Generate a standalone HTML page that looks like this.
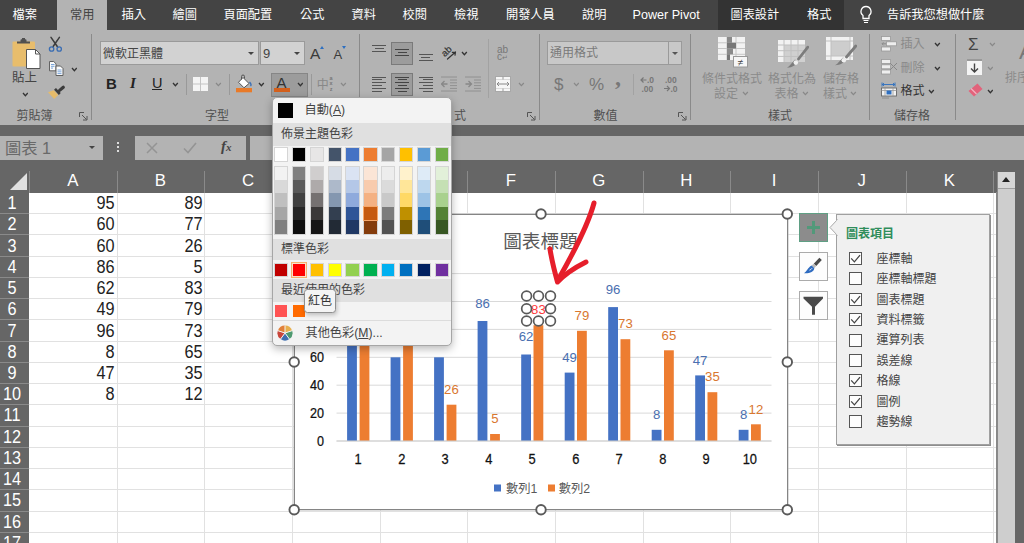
<!DOCTYPE html>
<html lang="zh-Hant"><head><meta charset="utf-8"><title>Excel</title>
<style>
*{box-sizing:border-box;margin:0;padding:0}
html,body{width:1024px;height:543px;overflow:hidden;background:#666}
body{position:relative;font-family:"Liberation Sans","Noto Sans CJK TC",sans-serif;color:#444;font-size:12px}
.abs{position:absolute}
.t{position:absolute;white-space:nowrap;line-height:1}
#tabs{position:absolute;left:0;top:0;width:1024px;height:30px;background:#444}
#tabs .t{color:#fff;font-size:12.2px;top:9px}
#ribbon{position:absolute;left:0;top:30px;width:1024px;height:95px;background:#b3b3b3}
.vsep{position:absolute;width:1px;background:#8c8c8c}
.glabel{position:absolute;font-size:12px;color:#505050;top:110px;line-height:1;white-space:nowrap}
#sheet{position:absolute;left:0;top:193px;width:996px;height:350px;background:#fff;overflow:hidden}
.cell{position:absolute;font-size:17.500px;transform:scaleX(.93);transform-origin:right center;color:#222;text-align:right;line-height:1;white-space:nowrap}
.rh{position:absolute;left:0;width:24px;color:#fff;font-size:17.500px;line-height:1;text-align:center;transform:scaleX(.93);transform-origin:center center}
.ch{position:absolute;color:#fff;font-size:16.800px;line-height:1;top:173.300px;text-align:center}
</style></head><body>
<div id="tabs">
<div class="abs" style="left:57px;top:0;width:50px;height:30px;background:#b3b3b3"></div>
<div class="abs" style="left:718px;top:0;width:126px;height:30px;background:#333"></div>
<span class="t" style="left:12.5px;color:#fff">檔案</span>
<span class="t" style="left:70px;color:#444">常用</span>
<span class="t" style="left:121.5px;color:#fff">插入</span>
<span class="t" style="left:172.5px;color:#fff">繪圖</span>
<span class="t" style="left:223.5px;color:#fff">頁面配置</span>
<span class="t" style="left:300px;color:#fff">公式</span>
<span class="t" style="left:351.5px;color:#fff">資料</span>
<span class="t" style="left:402.5px;color:#fff">校閱</span>
<span class="t" style="left:454px;color:#fff">檢視</span>
<span class="t" style="left:506px;color:#fff">開發人員</span>
<span class="t" style="left:582px;color:#fff">說明</span>
<span class="t" style="left:632.5px;color:#fff;font-size:12.600px">Power Pivot</span>
<span class="t" style="left:730.5px;color:#fff">圖表設計</span>
<span class="t" style="left:807px;color:#fff">格式</span>
<span class="t" style="left:887px;color:#fff">告訴我您想做什麼</span>
<svg class="abs" style="left:858px;top:5px" width="16" height="20" viewBox="0 0 16 20"><path d="M8 1.5a5 5 0 0 0-3 9v3h6v-3a5 5 0 0 0-3-9z" fill="none" stroke="#fff" stroke-width="1.3"/><path d="M5.5 15.5h5M6 17.5h4" stroke="#fff" stroke-width="1.2"/></svg>
</div>
<div id="ribbon">
<svg class="abs" style="left:11px;top:7px" width="31" height="33" viewBox="0 0 31 33"><rect x="1.5" y="4.5" width="22.5" height="25" rx="1" fill="#e8bd6c"/>
<path d="M6 6.5v-2h3.5v-1.2a1 1 0 0 1 1-1h4a1 1 0 0 1 1 1v1.200h3.5v2z" fill="#505050"/>
<rect x="11" y="1" width="3" height="2" fill="#505050"/>
<path d="M15.500 12.500h9l4.500 4.500v14.500h-13.500z" fill="#fff" stroke="#555" stroke-width="1"/>
<path d="M24.500 12.500v4.500h4.500" fill="none" stroke="#555" stroke-width="1"/></svg>
<span class="t" style="left:12px;top:42.2px;font-size:12.5px;color:#444;">貼上</span>
<svg class="abs" style="left:21.6px;top:61.9px" width="6.8" height="6" viewBox="0 0 6.8 6"><path d="M1 1l2.4 2.7l2.4 -2.7" fill="none" stroke="#333" stroke-width="1.3"/></svg>
<svg class="abs" style="left:40px;top:2px" width="50" height="70" viewBox="40 32 50 70"><path d="M51 37.400L57.300 46.500M59.400 37.400L53.100 46.500" stroke="#3c3c3c" stroke-width="1.500" fill="none" stroke-linecap="round"/><circle cx="51.600" cy="49" r="2.200" fill="none" stroke="#3a6db3" stroke-width="1.300"/><circle cx="59.200" cy="49" r="2.200" fill="none" stroke="#3a6db3" stroke-width="1.300"/><path d="M49.500 61.500h4.200l2.300 2.300v7h-6.500z" fill="#fafafa" stroke="#555" stroke-width=".9"/><path d="M51 64.500h3.500M51 66.300h3.500M51 68.100h2" stroke="#5b8fd0" stroke-width=".8"/><path d="M56 66h4.500l2.500 2.500v7h-7z" fill="#fafafa" stroke="#555" stroke-width=".9"/><path d="M57.500 70h4M57.500 71.800h4M57.500 73.600h4" stroke="#5b8fd0" stroke-width=".8"/><path d="M63.300 87.200L59.600 90.400" stroke="#3c3c3c" stroke-width="3.200" stroke-linecap="round"/><path d="M55 88.800L59.800 94" stroke="#3c3c3c" stroke-width="2.600"/><path d="M53.700 90.200L58.200 95l-4 4L48 92.300z" fill="#e6bb6a"/></svg>
<svg class="abs" style="left:70.6px;top:37.4px" width="6.8" height="6" viewBox="0 0 6.8 6"><path d="M1 1l2.4 2.7l2.4 -2.7" fill="none" stroke="#333" stroke-width="1.3"/></svg>
<span class="t" style="left:16.5px;top:80.0px;font-size:12px;color:#505050;">剪貼簿</span>
<svg class="abs" style="left:79px;top:82px" width="9" height="9" viewBox="0 0 9 9"><path d="M0.5 5V0.5H5" fill="none" stroke="#555" stroke-width="1"/><path d="M3 3l4.5 4.5M8 4v4H4" fill="none" stroke="#555" stroke-width="1"/></svg>
<div class="vsep" style="left:91px;top:4px;height:86px;background:#8a8a8a"></div>
<div class="abs" style="left:100px;top:11px;width:159px;height:24px;background:#d2d2d2;border:1px solid #9a9a9a;"></div>
<span class="t" style="left:103px;top:17.6px;font-size:12px;color:#444;">微軟正黑體</span>
<div class="abs" style="left:248.0px;top:21.5px;width:0;height:0;border-left:3.0px solid transparent;border-right:3.0px solid transparent;border-top:3px solid #444"></div>
<div class="abs" style="left:260px;top:11px;width:45px;height:24px;background:#d2d2d2;border:1px solid #9a9a9a;"></div>
<span class="t" style="left:263px;top:16.5px;font-size:13px;color:#444;">9</span>
<div class="abs" style="left:293.5px;top:21.5px;width:0;height:0;border-left:3.0px solid transparent;border-right:3.0px solid transparent;border-top:3px solid #444"></div>
<span class="t" style="left:310px;top:15.8px;font-size:15.5px;color:#3a3a3a;">A</span>
<div class="abs" style="left:319.5px;top:15.500px;width:0;height:0;border-left:2.500px solid transparent;border-right:2.500px solid transparent;border-bottom:3px solid #2e6fc0"></div>
<span class="t" style="left:333.5px;top:18.0px;font-size:13px;color:#3a3a3a;">A</span>
<div class="abs" style="left:342px;top:15.500px;width:0;height:0;border-left:2.500px solid transparent;border-right:2.500px solid transparent;border-top:3px solid #2e6fc0"></div>
<span class="t" style="left:106px;top:46.0px;font-size:15px;color:#222;font-weight:bold">B</span>
<span class="t" style="left:130px;top:46.0px;font-size:15px;color:#222;font-style:italic;font-weight:bold;font-family:'Liberation Serif',serif">I</span>
<span class="t" style="left:152px;top:45.8px;font-size:14.5px;color:#222;">U</span>
<div class="abs" style="left:152px;top:59px;width:10px;height:1px;background:#222;"></div>
<svg class="abs" style="left:171.9px;top:52.4px" width="6.8" height="6" viewBox="0 0 6.8 6"><path d="M1 1l2.4 2.7l2.4 -2.7" fill="none" stroke="#333" stroke-width="1.3"/></svg>
<div class="vsep" style="left:186px;top:44px;height:21px;background:#999"></div>
<svg class="abs" style="left:193px;top:47px" width="15" height="14" viewBox="0 0 15 14"><rect x="0" y="0" width="15" height="14" fill="#f4f4f4"/><path d="M7.500 0v14M0 7h15" stroke="#c4c4c4" stroke-width="1"/></svg>
<svg class="abs" style="left:215.2px;top:52.4px" width="6.8" height="6" viewBox="0 0 6.8 6"><path d="M1 1l2.4 2.7l2.4 -2.7" fill="none" stroke="#888" stroke-width="1.2"/></svg>
<div class="vsep" style="left:229px;top:44px;height:21px;background:#999"></div>
<svg class="abs" style="left:235px;top:44px" width="18" height="19" viewBox="0 0 18 19"><rect x="1" y="14" width="16" height="4.300" fill="#e97a28"/>
<path d="M8 3.500l6 6-5 4.300-5.500-5.500z" fill="#fff" stroke="#555" stroke-width="1"/>
<path d="M6.500 5.500v-3a1.500 1.500 0 0 1 3 0v2" fill="none" stroke="#555" stroke-width="1"/>
<path d="M14.500 8c1.500 1.500 2 3 1 4" fill="none" stroke="#3a6fb5" stroke-width="1.300"/></svg>
<svg class="abs" style="left:258.2px;top:52.4px" width="6.8" height="6" viewBox="0 0 6.8 6"><path d="M1 1l2.4 2.7l2.4 -2.7" fill="none" stroke="#333" stroke-width="1.3"/></svg>
<div class="abs" style="left:271px;top:43px;width:37px;height:24px;background:#9c9c9c;border:1px solid #868686;"></div>
<span class="t" style="left:276.5px;top:44.8px;font-size:15px;color:#333;">A</span>
<div class="abs" style="left:274px;top:58px;width:16px;height:4px;background:#d4601c;"></div>
<svg class="abs" style="left:296.6px;top:52.4px" width="6.8" height="6" viewBox="0 0 6.8 6"><path d="M1 1l2.4 2.7l2.4 -2.7" fill="none" stroke="#333" stroke-width="1.3"/></svg>
<div class="vsep" style="left:311px;top:44px;height:21px;background:#999"></div>
<span class="t" style="left:316.8px;top:49.3px;font-size:12px;color:#888;">中</span>
<span class="t" style="left:328.500px;top:46.200px;font-size:5.500px;line-height:5.200px;color:#777;white-space:normal;width:5px;text-align:center;font-weight:bold">a x z</span>
<svg class="abs" style="left:339.8px;top:52.4px" width="6.8" height="6" viewBox="0 0 6.8 6"><path d="M1 1l2.4 2.7l2.4 -2.7" fill="none" stroke="#888" stroke-width="1.2"/></svg>
<span class="t" style="left:205px;top:80.0px;font-size:12px;color:#505050;">字型</span>
<div class="vsep" style="left:359px;top:4px;height:86px;background:#8a8a8a"></div>
<div class="abs" style="left:391px;top:12px;width:22px;height:23px;background:#9c9c9c;border:1px solid #7a7a7a;"></div>
<div class="abs" style="left:391px;top:43px;width:22px;height:23px;background:#9c9c9c;border:1px solid #7a7a7a;"></div>
<div class="abs" style="left:372.0px;top:15px;width:14.0px;height:1px;background:#555;"></div>
<div class="abs" style="left:374.5px;top:18px;width:9.0px;height:1px;background:#555;"></div>
<div class="abs" style="left:372.0px;top:21px;width:14.0px;height:1px;background:#555;"></div>
<div class="abs" style="left:395.0px;top:19px;width:14.0px;height:1px;background:#444;"></div>
<div class="abs" style="left:397.5px;top:22px;width:9.0px;height:1px;background:#444;"></div>
<div class="abs" style="left:395.0px;top:25px;width:14.0px;height:1px;background:#444;"></div>
<div class="abs" style="left:418.5px;top:24px;width:14.0px;height:1px;background:#555;"></div>
<div class="abs" style="left:421.0px;top:27px;width:9.0px;height:1px;background:#555;"></div>
<div class="abs" style="left:418.5px;top:30px;width:14.0px;height:1px;background:#555;"></div>
<div class="abs" style="left:372px;top:46.5px;width:14px;height:1.0px;background:#555;"></div>
<div class="abs" style="left:372px;top:49.3px;width:10px;height:1.0px;background:#555;"></div>
<div class="abs" style="left:372px;top:52.099999999999994px;width:14px;height:1.0px;background:#555;"></div>
<div class="abs" style="left:372px;top:54.900000000000006px;width:10px;height:1.0px;background:#555;"></div>
<div class="abs" style="left:372px;top:57.7px;width:14px;height:1.0px;background:#555;"></div>
<div class="abs" style="left:372px;top:60.5px;width:10px;height:1.0px;background:#555;"></div>
<div class="abs" style="left:395.0px;top:46.5px;width:14.0px;height:1.0px;background:#444;"></div>
<div class="abs" style="left:397.5px;top:49.3px;width:9.0px;height:1.0px;background:#444;"></div>
<div class="abs" style="left:395.0px;top:52.099999999999994px;width:14.0px;height:1.0px;background:#444;"></div>
<div class="abs" style="left:397.5px;top:54.900000000000006px;width:9.0px;height:1.0px;background:#444;"></div>
<div class="abs" style="left:395.0px;top:57.7px;width:14.0px;height:1.0px;background:#444;"></div>
<div class="abs" style="left:397.5px;top:60.5px;width:9.0px;height:1.0px;background:#444;"></div>
<div class="abs" style="left:418.5px;top:46.5px;width:14.0px;height:1.0px;background:#555;"></div>
<div class="abs" style="left:422.5px;top:49.3px;width:10.0px;height:1.0px;background:#555;"></div>
<div class="abs" style="left:418.5px;top:52.099999999999994px;width:14.0px;height:1.0px;background:#555;"></div>
<div class="abs" style="left:422.5px;top:54.900000000000006px;width:10.0px;height:1.0px;background:#555;"></div>
<div class="abs" style="left:418.5px;top:57.7px;width:14.0px;height:1.0px;background:#555;"></div>
<div class="abs" style="left:422.5px;top:60.5px;width:10.0px;height:1.0px;background:#555;"></div>
<svg class="abs" style="left:441px;top:15px" width="17" height="16" viewBox="0 0 17 16"><text x="1.500" y="9.500" font-size="9.500" fill="#333" stroke="#333" stroke-width=".2" font-family="Liberation Sans" transform="rotate(-42 6 8)">ab</text>
<path d="M6.500 14L14.500 7M14.500 7l-3.200 0.300M14.500 7l-0.500 3.200" stroke="#333" stroke-width="1.200" fill="none" stroke-linecap="round"/></svg>
<svg class="abs" style="left:461.1px;top:21.4px" width="6.8" height="6" viewBox="0 0 6.8 6"><path d="M1 1l2.4 2.7l2.4 -2.7" fill="none" stroke="#333" stroke-width="1.3"/></svg>
<svg class="abs" style="left:441px;top:46px" width="16" height="16" viewBox="0 0 16 16"><path d="M0 1h16M0 15h16M9 4h7M9 6.800h7M9 9.600h7M9 12.400h7" stroke="#909090" stroke-width="1"/><path d="M0.500 8h6M3.500 5l-3 3 3 3" fill="none" stroke="#888" stroke-width="1.300"/></svg>
<svg class="abs" style="left:464.5px;top:46px" width="16" height="16" viewBox="0 0 16 16"><path d="M0 1h16M0 15h16M9 4h7M9 6.800h7M9 9.600h7M9 12.400h7" stroke="#909090" stroke-width="1"/><path d="M0.500 8h6M3.500 5l3 3-3 3" fill="none" stroke="#888" stroke-width="1.300"/></svg>
<div class="vsep" style="left:487.5px;top:9px;height:59px;background:#a2a2a2"></div>
<span class="t" style="left:497px;top:15.500px;font-size:10px;line-height:7.500px;color:#777;white-space:normal;width:14px">ab c<span style="font-size:7px">↵</span></span>
<svg class="abs" style="left:495px;top:46px" width="16" height="16" viewBox="0 0 16 16"><rect x=".5" y=".5" width="15" height="15" fill="#f6f6f6" stroke="#a8a8a8" stroke-width="1"/><path d="M1 3.500h14M1 12.500h14" stroke="#dadada" stroke-width="1"/><path d="M8 0.500v3M8 12.500v3" stroke="#9a9a9a" stroke-width="1"/><path d="M2 8h12M4 6l-2 2 2 2M12 6l2 2-2 2" fill="none" stroke="#888" stroke-width="1"/></svg>
<svg class="abs" style="left:518.0px;top:52.4px" width="6.8" height="6" viewBox="0 0 6.8 6"><path d="M1 1l2.4 2.7l2.4 -2.7" fill="none" stroke="#888" stroke-width="1.2"/></svg>
<span class="t" style="left:454px;top:80.0px;font-size:12px;color:#505050;">式</span>
<svg class="abs" style="left:526.5px;top:82px" width="9" height="9" viewBox="0 0 9 9"><path d="M0.5 5V0.5H5" fill="none" stroke="#555" stroke-width="1"/><path d="M3 3l4.5 4.5M8 4v4H4" fill="none" stroke="#555" stroke-width="1"/></svg>
<div class="vsep" style="left:538.5px;top:4px;height:86px;background:#8a8a8a"></div>
<div class="abs" style="left:547px;top:11px;width:135px;height:24px;background:#c8c8c8;border:1px solid #9a9a9a;"></div>
<div class="vsep" style="left:668px;top:12px;height:22px;background:#9a9a9a"></div>
<span class="t" style="left:550px;top:17.0px;font-size:12px;color:#7a7a7a;">通用格式</span>
<div class="abs" style="left:671.5px;top:21.5px;width:0;height:0;border-left:3.0px solid transparent;border-right:3.0px solid transparent;border-top:3px solid #555"></div>
<span class="t" style="left:554px;top:45.5px;font-size:17px;color:#777;">$</span>
<svg class="abs" style="left:572.6px;top:52.4px" width="6.8" height="6" viewBox="0 0 6.8 6"><path d="M1 1l2.4 2.7l2.4 -2.7" fill="none" stroke="#888" stroke-width="1.2"/></svg>
<span class="t" style="left:589px;top:45.5px;font-size:17px;color:#777;">%</span>
<span class="t" style="left:615px;top:35.0px;font-size:24px;color:#777;font-family:'Liberation Serif',serif;font-weight:bold">,</span>
<div class="vsep" style="left:633px;top:44px;height:21px;background:#a2a2a2"></div>
<svg class="abs" style="left:639px;top:45px" width="42" height="18" viewBox="639 75 42 18" font-family="Liberation Sans, sans-serif" font-weight="bold" font-size="8.500" fill="#777"><path d="M641 80h5.500M643.500 77.500l-2.500 2.500 2.500 2.500" fill="none" stroke="#777" stroke-width="1.200"/><text x="647" y="83">.0</text><text x="641.500" y="91.500">.00</text><text x="665" y="83">.00</text><path d="M664 88.500h5.500M667 86l2.500 2.500-2.500 2.500" fill="none" stroke="#777" stroke-width="1.200"/><text x="670.500" y="91.500">.0</text></svg>
<span class="t" style="left:593.5px;top:80.0px;font-size:12px;color:#505050;">數值</span>
<svg class="abs" style="left:678px;top:82px" width="9" height="9" viewBox="0 0 9 9"><path d="M0.5 5V0.5H5" fill="none" stroke="#555" stroke-width="1"/><path d="M3 3l4.5 4.5M8 4v4H4" fill="none" stroke="#555" stroke-width="1"/></svg>
<div class="vsep" style="left:690px;top:4px;height:86px;background:#8a8a8a"></div>
<svg class="abs" style="left:718px;top:7px" width="30" height="31" viewBox="0 0 30 31"><rect x="0" y="0" width="27" height="23" fill="#f2f2f2"/>
<path d="M0 5.800h27M0 11.500h27M0 17.300h27M9 0v23M18 0v23" stroke="#c6c6c6" stroke-width="1"/>
<rect x="9" y="0" width="5" height="5.800" fill="#8a8a8a"/><rect x="9" y="5.800" width="9" height="5.700" fill="#777"/>
<rect x="9" y="11.500" width="6" height="5.800" fill="#8a8a8a"/><rect x="9" y="17.300" width="3" height="5.700" fill="#777"/>
<rect x="15.500" y="19.500" width="14" height="10.500" fill="#f6f6f6" stroke="#999" stroke-width="1"/>
<text x="22.500" y="28.500" font-size="10" text-anchor="middle" fill="#444" font-family="Liberation Sans">≠</text></svg>
<span class="t" style="left:702px;top:42.7px;font-size:12px;color:#8a8a8a;">條件式格式</span>
<span class="t" style="left:714px;top:57.5px;font-size:12px;color:#8a8a8a;">設定</span>
<svg class="abs" style="left:742.1px;top:61.4px" width="6.8" height="6" viewBox="0 0 6.8 6"><path d="M1 1l2.4 2.7l2.4 -2.7" fill="none" stroke="#888" stroke-width="1.2"/></svg>
<svg class="abs" style="left:778px;top:10px" width="31" height="29" viewBox="0 0 31 29"><rect x="0" y="0" width="27" height="22" fill="#f2f2f2"/>
<rect x="6" y="5" width="21" height="17" fill="#d0d0d0"/>
<path d="M0 5h27M0 10.700h27M0 16.400h27M6 0v22M13 0v22M20 0v22" stroke="#c0c0c0" stroke-width="1"/>
<path d="M29.800 7.200L20.500 19" stroke="#7c7c7c" stroke-width="2.800" stroke-linecap="round"/>
<path d="M19.500 21.500c-1 3.500-5 6-10.500 6.300 3-1.500 4.500-5 8-8.300z" fill="#7c7c7c"/>
<circle cx="17.800" cy="22.600" r="2.300" fill="#f0f0f0"/></svg>
<span class="t" style="left:768px;top:42.7px;font-size:12px;color:#8a8a8a;">格式化為</span>
<span class="t" style="left:774.5px;top:57.5px;font-size:12px;color:#8a8a8a;">表格</span>
<svg class="abs" style="left:802.1px;top:61.4px" width="6.8" height="6" viewBox="0 0 6.8 6"><path d="M1 1l2.4 2.7l2.4 -2.7" fill="none" stroke="#888" stroke-width="1.2"/></svg>
<svg class="abs" style="left:826px;top:7px" width="31" height="30" viewBox="0 0 31 30"><rect x="0" y="0" width="27" height="23" fill="#f2f2f2"/>
<rect x="5" y="4" width="19" height="15" fill="#cdcdcd"/>
<path d="M0 4h27M0 19h27M5 0v23M24 0v23" stroke="#c0c0c0" stroke-width="1"/>
<path d="M29.800 9L20.500 20" stroke="#7c7c7c" stroke-width="2.800" stroke-linecap="round"/>
<path d="M19.500 22.500c-1 3.500-5 5.500-10.500 5.800 3-1.500 4.500-4.500 8-7.800z" fill="#7c7c7c"/>
<circle cx="17.800" cy="23.200" r="2.300" fill="#f0f0f0"/></svg>
<span class="t" style="left:823px;top:42.7px;font-size:12px;color:#8a8a8a;">儲存格</span>
<span class="t" style="left:823px;top:57.5px;font-size:12px;color:#8a8a8a;">樣式</span>
<svg class="abs" style="left:850.1px;top:61.4px" width="6.8" height="6" viewBox="0 0 6.8 6"><path d="M1 1l2.4 2.7l2.4 -2.7" fill="none" stroke="#888" stroke-width="1.2"/></svg>
<span class="t" style="left:768px;top:80.0px;font-size:12px;color:#505050;">樣式</span>
<div class="vsep" style="left:869px;top:4px;height:86px;background:#8a8a8a"></div>
<svg class="abs" style="left:881px;top:6px" width="17" height="16" viewBox="0 0 17 16"><rect x="0.500" y="0.500" width="9" height="4" fill="#eee" stroke="#999" stroke-width=".8"/>
<rect x="5.500" y="5.800" width="10" height="4" fill="#eee" stroke="#999" stroke-width=".8"/>
<rect x="0.500" y="11" width="9" height="4" fill="#eee" stroke="#999" stroke-width=".8"/>
<path d="M1 7.800h4M2.500 6.300l-1.500 1.500 1.500 1.500" fill="none" stroke="#888" stroke-width=".9"/></svg>
<span class="t" style="left:900.5px;top:8.0px;font-size:12px;color:#8a8a8a;">插入</span>
<svg class="abs" style="left:934.3px;top:12.4px" width="6.8" height="6" viewBox="0 0 6.8 6"><path d="M1 1l2.4 2.7l2.4 -2.7" fill="none" stroke="#333" stroke-width="1.3"/></svg>
<svg class="abs" style="left:881px;top:29px" width="17" height="16" viewBox="0 0 17 16"><rect x="0.500" y="0.500" width="9" height="4" fill="#eee" stroke="#999" stroke-width=".8"/>
<rect x="0.500" y="5.800" width="9" height="4" fill="#eee" stroke="#999" stroke-width=".8"/>
<rect x="0.500" y="11" width="9" height="4" fill="#eee" stroke="#999" stroke-width=".8"/>
<path d="M9 4l7 7M16 4l-7 7" fill="none" stroke="#888" stroke-width="1"/></svg>
<span class="t" style="left:900.5px;top:31.5px;font-size:12px;color:#8a8a8a;">刪除</span>
<svg class="abs" style="left:934.3px;top:35.9px" width="6.8" height="6" viewBox="0 0 6.8 6"><path d="M1 1l2.4 2.7l2.4 -2.7" fill="none" stroke="#333" stroke-width="1.3"/></svg>
<svg class="abs" style="left:881px;top:52px" width="17" height="17" viewBox="0 0 17 17"><path d="M1 2.500h13M1 0.500v4M14 0.500v4M3 1l-1.500 1.500 1.500 1.500M12 1l1.500 1.500-1.500 1.500" fill="none" stroke="#2e6fc0" stroke-width=".9"/>
<rect x="0.500" y="6" width="15" height="8" fill="#f2f2f2" stroke="#666" stroke-width=".9"/>
<path d="M4 6v8M12 6v8M0.500 8.500h15" stroke="#999" stroke-width=".8"/>
<rect x="5.500" y="8.500" width="5" height="4" fill="#2e6fc0"/>
<path d="M1 16h7" stroke="#888" stroke-width=".9"/></svg>
<span class="t" style="left:900.5px;top:54.5px;font-size:12px;color:#333;">格式</span>
<svg class="abs" style="left:928.4px;top:58.9px" width="6.8" height="6" viewBox="0 0 6.8 6"><path d="M1 1l2.4 2.7l2.4 -2.7" fill="none" stroke="#333" stroke-width="1.3"/></svg>
<span class="t" style="left:894px;top:80.0px;font-size:12px;color:#505050;">儲存格</span>
<div class="vsep" style="left:955px;top:4px;height:86px;background:#8a8a8a"></div>
<span class="t" style="left:968px;top:5.5px;font-size:17px;color:#444;">Σ</span>
<svg class="abs" style="left:989.2px;top:12.4px" width="6.8" height="6" viewBox="0 0 6.8 6"><path d="M1 1l2.4 2.7l2.4 -2.7" fill="none" stroke="#888" stroke-width="1.2"/></svg>
<svg class="abs" style="left:967px;top:29px" width="15" height="16" viewBox="0 0 15 16"><rect x="0" y="0" width="15" height="16" fill="#f4f4f4"/><rect x="0" y="0" width="15" height="2" fill="#999"/>
<path d="M7.500 4.500v8M4 9.500l3.500 3.500 3.500-3.500" fill="none" stroke="#444" stroke-width="1.400"/></svg>
<svg class="abs" style="left:986.6px;top:35.9px" width="6.8" height="6" viewBox="0 0 6.8 6"><path d="M1 1l2.4 2.7l2.4 -2.7" fill="none" stroke="#888" stroke-width="1.2"/></svg>
<svg class="abs" style="left:967px;top:53px" width="16" height="15" viewBox="0 0 16 15"><path d="M10.500 0.500l5 5.500-8.500 7.500-5.500-5.500z" fill="#e2637b"/><path d="M4 5.500l5.500 5.500" stroke="#f3b3c0" stroke-width="1.200"/></svg>
<svg class="abs" style="left:986.6px;top:58.9px" width="6.8" height="6" viewBox="0 0 6.8 6"><path d="M1 1l2.4 2.7l2.4 -2.7" fill="none" stroke="#333" stroke-width="1.3"/></svg>
<span class="t" style="left:1005px;top:42.0px;font-size:12px;color:#8a8a8a;">排序</span>
<span class="t" style="left:1019px;top:11.0px;font-size:22px;color:#777;">A</span>

</div>
<div class="abs" style="left:0;top:136px;width:103px;height:24px;background:#b3b3b3"></div>
<span class="t" style="left:5px;top:139.500px;font-size:16.300px;color:#696969">圖表 1</span>
<div class="abs" style="left:89px;top:146px;width:0;height:0;border-left:3px solid transparent;border-right:3px solid transparent;border-top:3px solid #444"></div>
<div class="abs" style="left:117px;top:142px;width:2px;height:2px;background:#ddd;box-shadow:0 4px 0 #ddd,0 8px 0 #ddd"></div>
<div class="abs" style="left:135px;top:136px;width:111px;height:24px;background:#b3b3b3"></div>
<svg class="abs" style="left:146px;top:142px" width="12" height="12" viewBox="0 0 12 12"><path d="M1 1l10 10M11 1L1 11" stroke="#949494" stroke-width="1.5"/></svg>
<svg class="abs" style="left:183px;top:142px" width="14" height="12" viewBox="0 0 14 12"><path d="M1 6.5l4 4L13 1" fill="none" stroke="#949494" stroke-width="1.6"/></svg>
<span class="t" style="left:221px;top:139px;font-size:15px;color:#444;font-family:'Liberation Serif',serif;font-style:italic;font-weight:bold">f<span style="font-size:11px">x</span></span>
<div class="abs" style="left:250px;top:136px;width:774px;height:24px;background:#b3b3b3"></div>
<span class="ch" style="left:29px;width:87.5px">A</span><div class="abs" style="left:116.5px;top:171px;width:1px;height:22px;background:#8a8a8a"></div>
<span class="ch" style="left:116.5px;width:87.5px">B</span><div class="abs" style="left:204px;top:171px;width:1px;height:22px;background:#8a8a8a"></div>
<span class="ch" style="left:204px;width:88px">C</span><div class="abs" style="left:292px;top:171px;width:1px;height:22px;background:#8a8a8a"></div>
<span class="ch" style="left:292px;width:87.5px">D</span><div class="abs" style="left:379.5px;top:171px;width:1px;height:22px;background:#8a8a8a"></div>
<span class="ch" style="left:379.5px;width:87.5px">E</span><div class="abs" style="left:467px;top:171px;width:1px;height:22px;background:#8a8a8a"></div>
<span class="ch" style="left:467px;width:88px">F</span><div class="abs" style="left:555px;top:171px;width:1px;height:22px;background:#8a8a8a"></div>
<span class="ch" style="left:555px;width:87.5px">G</span><div class="abs" style="left:642.5px;top:171px;width:1px;height:22px;background:#8a8a8a"></div>
<span class="ch" style="left:642.5px;width:87.5px">H</span><div class="abs" style="left:730px;top:171px;width:1px;height:22px;background:#8a8a8a"></div>
<span class="ch" style="left:730px;width:88px">I</span><div class="abs" style="left:818px;top:171px;width:1px;height:22px;background:#8a8a8a"></div>
<span class="ch" style="left:818px;width:87.5px">J</span><div class="abs" style="left:905.5px;top:171px;width:1px;height:22px;background:#8a8a8a"></div>
<span class="ch" style="left:905.5px;width:87.5px">K</span><div class="abs" style="left:993px;top:171px;width:1px;height:22px;background:#8a8a8a"></div>
<div class="abs" style="left:29px;top:171px;width:1px;height:22px;background:#8a8a8a"></div>
<div class="abs" style="left:10px;top:173px;width:0;height:0;border-left:17px solid transparent;border-bottom:17px solid #e0e0e0"></div>
<div id="sheet">
<div class="abs" style="left:29px;top:20px;width:967px;height:1px;background:#e1e1e1"></div><div class="abs" style="left:29px;top:41px;width:967px;height:1px;background:#e1e1e1"></div><div class="abs" style="left:29px;top:63px;width:967px;height:1px;background:#e1e1e1"></div><div class="abs" style="left:29px;top:84px;width:967px;height:1px;background:#e1e1e1"></div><div class="abs" style="left:29px;top:105px;width:967px;height:1px;background:#e1e1e1"></div><div class="abs" style="left:29px;top:126px;width:967px;height:1px;background:#e1e1e1"></div><div class="abs" style="left:29px;top:148px;width:967px;height:1px;background:#e1e1e1"></div><div class="abs" style="left:29px;top:169px;width:967px;height:1px;background:#e1e1e1"></div><div class="abs" style="left:29px;top:190px;width:967px;height:1px;background:#e1e1e1"></div><div class="abs" style="left:29px;top:211px;width:967px;height:1px;background:#e1e1e1"></div><div class="abs" style="left:29px;top:233px;width:967px;height:1px;background:#e1e1e1"></div><div class="abs" style="left:29px;top:254px;width:967px;height:1px;background:#e1e1e1"></div><div class="abs" style="left:29px;top:275px;width:967px;height:1px;background:#e1e1e1"></div><div class="abs" style="left:29px;top:296px;width:967px;height:1px;background:#e1e1e1"></div><div class="abs" style="left:29px;top:318px;width:967px;height:1px;background:#e1e1e1"></div><div class="abs" style="left:29px;top:339px;width:967px;height:1px;background:#e1e1e1"></div><div class="abs" style="left:29px;top:360px;width:967px;height:1px;background:#e1e1e1"></div>
<div class="abs" style="left:116.5px;top:0;width:1px;height:351px;background:#e1e1e1"></div><div class="abs" style="left:204px;top:0;width:1px;height:351px;background:#e1e1e1"></div><div class="abs" style="left:292px;top:0;width:1px;height:351px;background:#e1e1e1"></div><div class="abs" style="left:379.5px;top:0;width:1px;height:351px;background:#e1e1e1"></div><div class="abs" style="left:467px;top:0;width:1px;height:351px;background:#e1e1e1"></div><div class="abs" style="left:555px;top:0;width:1px;height:351px;background:#e1e1e1"></div><div class="abs" style="left:642.5px;top:0;width:1px;height:351px;background:#e1e1e1"></div><div class="abs" style="left:730px;top:0;width:1px;height:351px;background:#e1e1e1"></div><div class="abs" style="left:818px;top:0;width:1px;height:351px;background:#e1e1e1"></div><div class="abs" style="left:905.5px;top:0;width:1px;height:351px;background:#e1e1e1"></div><div class="abs" style="left:993px;top:0;width:1px;height:351px;background:#e1e1e1"></div>
<div class="abs" style="left:0;top:0;width:29px;height:351px;background:#666"></div>
<span class="rh" style="top:2.0px">1</span><div class="abs" style="left:0;top:20px;width:29px;height:1px;background:#8a8a8a"></div>
<span class="rh" style="top:23.3px">2</span><div class="abs" style="left:0;top:41px;width:29px;height:1px;background:#8a8a8a"></div>
<span class="rh" style="top:44.5px">3</span><div class="abs" style="left:0;top:63px;width:29px;height:1px;background:#8a8a8a"></div>
<span class="rh" style="top:65.8px">4</span><div class="abs" style="left:0;top:84px;width:29px;height:1px;background:#8a8a8a"></div>
<span class="rh" style="top:87.0px">5</span><div class="abs" style="left:0;top:105px;width:29px;height:1px;background:#8a8a8a"></div>
<span class="rh" style="top:108.2px">6</span><div class="abs" style="left:0;top:126px;width:29px;height:1px;background:#8a8a8a"></div>
<span class="rh" style="top:129.5px">7</span><div class="abs" style="left:0;top:148px;width:29px;height:1px;background:#8a8a8a"></div>
<span class="rh" style="top:150.7px">8</span><div class="abs" style="left:0;top:169px;width:29px;height:1px;background:#8a8a8a"></div>
<span class="rh" style="top:172.0px">9</span><div class="abs" style="left:0;top:190px;width:29px;height:1px;background:#8a8a8a"></div>
<span class="rh" style="top:193.2px">10</span><div class="abs" style="left:0;top:211px;width:29px;height:1px;background:#8a8a8a"></div>
<span class="rh" style="top:214.4px">11</span><div class="abs" style="left:0;top:233px;width:29px;height:1px;background:#8a8a8a"></div>
<span class="rh" style="top:235.7px">12</span><div class="abs" style="left:0;top:254px;width:29px;height:1px;background:#8a8a8a"></div>
<span class="rh" style="top:256.9px">13</span><div class="abs" style="left:0;top:275px;width:29px;height:1px;background:#8a8a8a"></div>
<span class="rh" style="top:278.2px">14</span><div class="abs" style="left:0;top:296px;width:29px;height:1px;background:#8a8a8a"></div>
<span class="rh" style="top:299.4px">15</span><div class="abs" style="left:0;top:318px;width:29px;height:1px;background:#8a8a8a"></div>
<span class="rh" style="top:320.6px">16</span><div class="abs" style="left:0;top:339px;width:29px;height:1px;background:#8a8a8a"></div>
<span class="rh" style="top:341.9px">17</span><div class="abs" style="left:0;top:360px;width:29px;height:1px;background:#8a8a8a"></div>
<span class="cell" style="left:29px;width:85.5px;top:2.0px">95</span><span class="cell" style="left:116.5px;width:85.5px;top:2.0px">89</span>
<span class="cell" style="left:29px;width:85.5px;top:23.3px">60</span><span class="cell" style="left:116.5px;width:85.5px;top:23.3px">77</span>
<span class="cell" style="left:29px;width:85.5px;top:44.5px">60</span><span class="cell" style="left:116.5px;width:85.5px;top:44.5px">26</span>
<span class="cell" style="left:29px;width:85.5px;top:65.8px">86</span><span class="cell" style="left:116.5px;width:85.5px;top:65.8px">5</span>
<span class="cell" style="left:29px;width:85.5px;top:87.0px">62</span><span class="cell" style="left:116.5px;width:85.5px;top:87.0px">83</span>
<span class="cell" style="left:29px;width:85.5px;top:108.2px">49</span><span class="cell" style="left:116.5px;width:85.5px;top:108.2px">79</span>
<span class="cell" style="left:29px;width:85.5px;top:129.5px">96</span><span class="cell" style="left:116.5px;width:85.5px;top:129.5px">73</span>
<span class="cell" style="left:29px;width:85.5px;top:150.7px">8</span><span class="cell" style="left:116.5px;width:85.5px;top:150.7px">65</span>
<span class="cell" style="left:29px;width:85.5px;top:172.0px">47</span><span class="cell" style="left:116.5px;width:85.5px;top:172.0px">35</span>
<span class="cell" style="left:29px;width:85.5px;top:193.2px">8</span><span class="cell" style="left:116.5px;width:85.5px;top:193.2px">12</span>
</div>
<div class="abs" style="left:294px;top:214px;width:494px;height:296px;background:#fff;border:1px solid #858585;box-shadow:0 0 0 1px rgba(190,190,190,.5)"></div>
<svg class="abs" style="left:0;top:0" width="1024" height="543" viewBox="0 0 1024 543" font-family="Liberation Sans, Noto Sans CJK TC, sans-serif">
<line x1="336.5" x2="771.5" y1="441.0" y2="441.0" stroke="#d9d9d9" stroke-width="1"/>
<text transform="translate(324 446.0) scale(.9 1)" font-size="14" text-anchor="end" fill="#111" stroke="#111" stroke-width=".25">0</text>
<line x1="336.5" x2="771.5" y1="413.1" y2="413.1" stroke="#d9d9d9" stroke-width="1"/>
<text transform="translate(324 418.1) scale(.9 1)" font-size="14" text-anchor="end" fill="#111" stroke="#111" stroke-width=".25">20</text>
<line x1="336.5" x2="771.5" y1="385.2" y2="385.2" stroke="#d9d9d9" stroke-width="1"/>
<text transform="translate(324 390.2) scale(.9 1)" font-size="14" text-anchor="end" fill="#111" stroke="#111" stroke-width=".25">40</text>
<line x1="336.5" x2="771.5" y1="357.3" y2="357.3" stroke="#d9d9d9" stroke-width="1"/>
<text transform="translate(324 362.3) scale(.9 1)" font-size="14" text-anchor="end" fill="#111" stroke="#111" stroke-width=".25">60</text>
<line x1="336.5" x2="771.5" y1="329.4" y2="329.4" stroke="#d9d9d9" stroke-width="1"/>
<text transform="translate(324 334.4) scale(.9 1)" font-size="14" text-anchor="end" fill="#111" stroke="#111" stroke-width=".25">80</text>
<line x1="336.5" x2="771.5" y1="301.5" y2="301.5" stroke="#d9d9d9" stroke-width="1"/>
<text transform="translate(324 306.5) scale(.9 1)" font-size="14" text-anchor="end" fill="#111" stroke="#111" stroke-width=".25">100</text>
<line x1="336.5" x2="771.5" y1="273.6" y2="273.6" stroke="#d9d9d9" stroke-width="1"/>
<text transform="translate(324 278.6) scale(.9 1)" font-size="14" text-anchor="end" fill="#111" stroke="#111" stroke-width=".25">120</text>
<rect x="347.1" y="308.5" width="9.8" height="132.5" fill="#4472c4"/>
<rect x="359.6" y="316.8" width="9.8" height="124.2" fill="#ed7d31"/>
<text transform="translate(358.2 464) scale(.92 1)" font-size="14" text-anchor="middle" fill="#111" stroke="#111" stroke-width=".25">1</text>
<text x="352.0" y="295.2" font-size="13.200" text-anchor="middle" fill="#4a6fb0">95</text>
<text x="364.4" y="306.0" font-size="13.200" text-anchor="middle" fill="#d9772f">89</text>
<rect x="390.6" y="357.3" width="9.8" height="83.7" fill="#4472c4"/>
<rect x="403.1" y="333.6" width="9.8" height="107.4" fill="#ed7d31"/>
<text transform="translate(401.8 464) scale(.92 1)" font-size="14" text-anchor="middle" fill="#111" stroke="#111" stroke-width=".25">2</text>
<text x="395.5" y="344.0" font-size="13.200" text-anchor="middle" fill="#4a6fb0">60</text>
<text x="407.9" y="322.8" font-size="13.200" text-anchor="middle" fill="#d9772f">77</text>
<rect x="434.1" y="357.3" width="9.8" height="83.7" fill="#4472c4"/>
<rect x="446.6" y="404.7" width="9.8" height="36.3" fill="#ed7d31"/>
<text transform="translate(445.2 464) scale(.92 1)" font-size="14" text-anchor="middle" fill="#111" stroke="#111" stroke-width=".25">3</text>
<text x="439.0" y="344.0" font-size="13.200" text-anchor="middle" fill="#4a6fb0">60</text>
<text x="451.4" y="393.9" font-size="13.200" text-anchor="middle" fill="#d9772f">26</text>
<rect x="477.6" y="321.0" width="9.8" height="120.0" fill="#4472c4"/>
<rect x="490.1" y="434.0" width="9.8" height="7.0" fill="#ed7d31"/>
<text transform="translate(488.8 464) scale(.92 1)" font-size="14" text-anchor="middle" fill="#111" stroke="#111" stroke-width=".25">4</text>
<text x="482.5" y="307.7" font-size="13.200" text-anchor="middle" fill="#4a6fb0">86</text>
<text x="494.9" y="423.2" font-size="13.200" text-anchor="middle" fill="#d9772f">5</text>
<rect x="521.2" y="354.5" width="9.8" height="86.5" fill="#4472c4"/>
<rect x="533.5" y="325.2" width="9.8" height="115.8" fill="#ed7d31"/>
<text transform="translate(532.2 464) scale(.92 1)" font-size="14" text-anchor="middle" fill="#111" stroke="#111" stroke-width=".25">5</text>
<text x="526.1" y="341.2" font-size="13.200" text-anchor="middle" fill="#4a6fb0">62</text>
<text x="538.4" y="314.4" font-size="13.200" text-anchor="middle" fill="#ff3b3b">83</text>
<rect x="564.7" y="372.6" width="9.8" height="68.4" fill="#4472c4"/>
<rect x="577.0" y="330.8" width="9.8" height="110.2" fill="#ed7d31"/>
<text transform="translate(575.8 464) scale(.92 1)" font-size="14" text-anchor="middle" fill="#111" stroke="#111" stroke-width=".25">6</text>
<text x="569.6" y="361.8" font-size="13.200" text-anchor="middle" fill="#4a6fb0">49</text>
<text x="581.9" y="320.0" font-size="13.200" text-anchor="middle" fill="#d9772f">79</text>
<rect x="608.2" y="307.1" width="9.8" height="133.9" fill="#4472c4"/>
<rect x="620.5" y="339.2" width="9.8" height="101.8" fill="#ed7d31"/>
<text transform="translate(619.2 464) scale(.92 1)" font-size="14" text-anchor="middle" fill="#111" stroke="#111" stroke-width=".25">7</text>
<text x="613.1" y="293.8" font-size="13.200" text-anchor="middle" fill="#4a6fb0">96</text>
<text x="625.4" y="328.4" font-size="13.200" text-anchor="middle" fill="#d9772f">73</text>
<rect x="651.7" y="429.8" width="9.8" height="11.2" fill="#4472c4"/>
<rect x="664.0" y="350.3" width="9.8" height="90.7" fill="#ed7d31"/>
<text transform="translate(662.8 464) scale(.92 1)" font-size="14" text-anchor="middle" fill="#111" stroke="#111" stroke-width=".25">8</text>
<text x="656.6" y="419.0" font-size="13.200" text-anchor="middle" fill="#4a6fb0">8</text>
<text x="668.9" y="339.5" font-size="13.200" text-anchor="middle" fill="#d9772f">65</text>
<rect x="695.2" y="375.4" width="9.8" height="65.6" fill="#4472c4"/>
<rect x="707.5" y="392.2" width="9.8" height="48.8" fill="#ed7d31"/>
<text transform="translate(706.2 464) scale(.92 1)" font-size="14" text-anchor="middle" fill="#111" stroke="#111" stroke-width=".25">9</text>
<text x="700.1" y="364.6" font-size="13.200" text-anchor="middle" fill="#4a6fb0">47</text>
<text x="712.4" y="381.4" font-size="13.200" text-anchor="middle" fill="#d9772f">35</text>
<rect x="738.7" y="429.8" width="9.8" height="11.2" fill="#4472c4"/>
<rect x="751.0" y="424.3" width="9.8" height="16.7" fill="#ed7d31"/>
<text transform="translate(749.8 464) scale(.92 1)" font-size="14" text-anchor="middle" fill="#111" stroke="#111" stroke-width=".25">10</text>
<text x="743.6" y="419.0" font-size="13.200" text-anchor="middle" fill="#4a6fb0">8</text>
<text x="755.9" y="413.5" font-size="13.200" text-anchor="middle" fill="#d9772f">12</text>
<line x1="336.5" x2="771.5" y1="441.0" y2="441.0" stroke="#d0d0d0" stroke-width="1"/>
<text x="540.500" y="247.500" font-size="18.700" text-anchor="middle" fill="#595959">圖表標題</text>
<rect x="494" y="484.500" width="7" height="7" fill="#4472c4"/><text x="506" y="492.700" font-size="12.300" fill="#595959">數列1</text>
<rect x="548" y="484.500" width="7" height="7" fill="#ed7d31"/><text x="558.700" y="492.700" font-size="12.300" fill="#595959">數列2</text>
<circle cx="526.6" cy="296" r="4.900" fill="#fff" stroke="#5a5a5a" stroke-width="1.700"/>
<circle cx="538.5" cy="296" r="4.900" fill="#fff" stroke="#5a5a5a" stroke-width="1.700"/>
<circle cx="550.5" cy="296" r="4.900" fill="#fff" stroke="#5a5a5a" stroke-width="1.700"/>
<circle cx="526.6" cy="308.7" r="4.900" fill="#fff" stroke="#5a5a5a" stroke-width="1.700"/>
<circle cx="550.5" cy="308.7" r="4.900" fill="#fff" stroke="#5a5a5a" stroke-width="1.700"/>
<circle cx="526.6" cy="321" r="4.900" fill="#fff" stroke="#5a5a5a" stroke-width="1.700"/>
<circle cx="538.5" cy="321" r="4.900" fill="#fff" stroke="#5a5a5a" stroke-width="1.700"/>
<circle cx="550.5" cy="321" r="4.900" fill="#fff" stroke="#5a5a5a" stroke-width="1.700"/>
<circle cx="294.2" cy="214" r="4.750" fill="#fff" stroke="#5a5a5a" stroke-width="1.900"/>
<circle cx="541" cy="214" r="4.750" fill="#fff" stroke="#5a5a5a" stroke-width="1.900"/>
<circle cx="787.3" cy="214" r="4.750" fill="#fff" stroke="#5a5a5a" stroke-width="1.900"/>
<circle cx="294.2" cy="362" r="4.750" fill="#fff" stroke="#5a5a5a" stroke-width="1.900"/>
<circle cx="787.3" cy="362" r="4.750" fill="#fff" stroke="#5a5a5a" stroke-width="1.900"/>
<circle cx="294.2" cy="509.7" r="4.750" fill="#fff" stroke="#5a5a5a" stroke-width="1.900"/>
<circle cx="541" cy="509.7" r="4.750" fill="#fff" stroke="#5a5a5a" stroke-width="1.900"/>
<circle cx="787.3" cy="509.7" r="4.750" fill="#fff" stroke="#5a5a5a" stroke-width="1.900"/>
<path d="M594 203C590 218 578 245 558 280" fill="none" stroke="#e61e2b" stroke-width="5" stroke-linecap="round"/>
<path d="M550 249C552 262 555 273 557.500 282C566 273 576 267 586 262" fill="none" stroke="#e61e2b" stroke-width="5" stroke-linecap="round" stroke-linejoin="round"/>
</svg>

<div class="abs" style="left:996px;top:192px;width:1px;height:351px;background:#888"></div>
<div class="abs" style="left:997px;top:172px;width:18px;height:371px;background:#cecece;border-left:1px solid #8a8a8a"></div>
<div class="abs" style="left:998px;top:172px;width:17px;height:17px;background:#d6d6d6;border-bottom:1px solid #a0a0a0"></div>
<div class="abs" style="left:1002px;top:177px;width:0;height:0;border-left:4px solid transparent;border-right:4px solid transparent;border-bottom:5px solid #222"></div>
<div class="abs" style="left:1015px;top:160px;width:9px;height:383px;background:#666"></div>
<div class="abs" style="left:799px;top:213px;width:29px;height:29px;background:#8c8c8c;border:1px solid #5f9f84"></div>
<div class="abs" style="left:807px;top:225.700px;width:13px;height:3.600px;background:#52997a"></div><div class="abs" style="left:811.700px;top:221px;width:3.600px;height:13px;background:#52997a"></div>
<div class="abs" style="left:799px;top:252px;width:29px;height:29px;background:#fdfdfd;border:1px solid #ababab"></div>
<svg class="abs" style="left:799px;top:252px" width="29" height="29" viewBox="799 252 29 29"><path d="M820.600 258.900L815 264.800" stroke="#4a4a4a" stroke-width="3.400" stroke-linecap="butt"/><path d="M814.700 265.100L813 266.900" stroke="#b9b9b9" stroke-width="3.600"/><path d="M811.600 265.600l2.700 2.700c-0.500 3.500-4.500 5.400-10.300 5 2.600-1.200 3.600-5.700 7.600-7.700z" fill="#2f6cc0"/><path d="M809.500 270.200c1-0.300 2-1 2.600-2" fill="none" stroke="#e8f0fb" stroke-width="1"/></svg>
<div class="abs" style="left:799px;top:291px;width:29px;height:29px;background:#fdfdfd;border:1px solid #ababab"></div>
<svg class="abs" style="left:802px;top:294px" width="23" height="23" viewBox="0 0 23 23"><path d="M1.500 2.800h19.500v1.800l-8 8.200v8h-3v-8L1.500 4.600z" fill="#4a4a4a"/></svg>
<div class="abs" style="left:836px;top:214px;width:154px;height:231px;background:#f0f0f0;border:1px solid #a0a0a0;box-shadow:1px 1px 0 #8e8e8e"></div>
<svg class="abs" style="left:829px;top:219px" width="9" height="17" viewBox="0 0 9 17"><path d="M8.500 0.500L1 8.500l7.500 8" fill="#f0f0f0" stroke="#a8a8a8" stroke-width="1"/><rect x="7.500" y="1.500" width="1.500" height="14" fill="#f0f0f0"/></svg>
<span class="t" style="left:846px;top:227.500px;font-size:12px;font-weight:bold;color:#2f8d5b">圖表項目</span>
<div class="abs" style="left:849px;top:251.8px;width:13px;height:13px;background:#fdfdfd;border:1px solid #555"></div>
<svg class="abs" style="left:849px;top:251.8px" width="13" height="13" viewBox="0 0 13 13"><path d="M2.200 6.300l3.200 3.500 5.600-6.600" fill="none" stroke="#444" stroke-width="1.250"/></svg>
<span class="t" style="left:876.500px;top:252.7px;font-size:12px;color:#444">座標軸</span>
<div class="abs" style="left:849px;top:272.2px;width:13px;height:13px;background:#fdfdfd;border:1px solid #555"></div>
<span class="t" style="left:876.500px;top:273.1px;font-size:12px;color:#444">座標軸標題</span>
<div class="abs" style="left:849px;top:292.6px;width:13px;height:13px;background:#fdfdfd;border:1px solid #555"></div>
<svg class="abs" style="left:849px;top:292.6px" width="13" height="13" viewBox="0 0 13 13"><path d="M2.200 6.300l3.200 3.500 5.600-6.600" fill="none" stroke="#444" stroke-width="1.250"/></svg>
<span class="t" style="left:876.500px;top:293.5px;font-size:12px;color:#444">圖表標題</span>
<div class="abs" style="left:849px;top:313.1px;width:13px;height:13px;background:#fdfdfd;border:1px solid #555"></div>
<svg class="abs" style="left:849px;top:313.1px" width="13" height="13" viewBox="0 0 13 13"><path d="M2.200 6.300l3.200 3.500 5.600-6.600" fill="none" stroke="#444" stroke-width="1.250"/></svg>
<span class="t" style="left:876.500px;top:314.0px;font-size:12px;color:#444">資料標籤</span>
<div class="abs" style="left:849px;top:333.5px;width:13px;height:13px;background:#fdfdfd;border:1px solid #555"></div>
<span class="t" style="left:876.500px;top:334.4px;font-size:12px;color:#444">運算列表</span>
<div class="abs" style="left:849px;top:353.9px;width:13px;height:13px;background:#fdfdfd;border:1px solid #555"></div>
<span class="t" style="left:876.500px;top:354.8px;font-size:12px;color:#444">誤差線</span>
<div class="abs" style="left:849px;top:374.3px;width:13px;height:13px;background:#fdfdfd;border:1px solid #555"></div>
<svg class="abs" style="left:849px;top:374.3px" width="13" height="13" viewBox="0 0 13 13"><path d="M2.200 6.300l3.200 3.500 5.600-6.600" fill="none" stroke="#444" stroke-width="1.250"/></svg>
<span class="t" style="left:876.500px;top:375.2px;font-size:12px;color:#444">格線</span>
<div class="abs" style="left:849px;top:394.7px;width:13px;height:13px;background:#fdfdfd;border:1px solid #555"></div>
<svg class="abs" style="left:849px;top:394.7px" width="13" height="13" viewBox="0 0 13 13"><path d="M2.200 6.300l3.200 3.500 5.600-6.600" fill="none" stroke="#444" stroke-width="1.250"/></svg>
<span class="t" style="left:876.500px;top:395.6px;font-size:12px;color:#444">圖例</span>
<div class="abs" style="left:849px;top:415.2px;width:13px;height:13px;background:#fdfdfd;border:1px solid #555"></div>
<span class="t" style="left:876.500px;top:416.1px;font-size:12px;color:#444">趨勢線</span>

<div class="abs" style="left:272px;top:96.5px;width:179.5px;height:249.0px;background:#f3f3f3;border:1px solid #a6a6a6;border-radius:5px;box-shadow:0 3px 8px rgba(0,0,0,.28);overflow:hidden">
<div class="abs" style="left:0;top:25.0px;width:180px;height:23.2px;background:#e0e0e0"></div>
<div class="abs" style="left:0;top:141.3px;width:180px;height:21.0px;background:#e0e0e0"></div>
<div class="abs" style="left:0;top:181.5px;width:180px;height:22.8px;background:#e0e0e0"></div>
</div>
<div class="abs" style="left:277.500px;top:102.500px;width:15px;height:15px;background:#000"></div>
<span class="t" style="left:304.5px;top:104.2px;font-size:12.2px;color:#444;">自動(<u>A</u>)</span>
<span class="t" style="left:281px;top:127.9px;font-size:12px;color:#444;">佈景主題色彩</span>
<span class="t" style="left:281px;top:243.0px;font-size:12px;color:#444;">標準色彩</span>
<span class="t" style="left:281px;top:284.0px;font-size:12px;color:#444;">最近使用的色彩</span>
<div class="abs" style="left:275.0px;top:148.400px;width:12.4px;height:12.600px;background:#ffffff;box-shadow:0 0 0 1px rgba(200,200,200,.7)"></div>
<div class="abs" style="left:275.0px;top:166.5px;width:12.4px;height:13.560px;background:#f2f2f2"></div>
<div class="abs" style="left:275.0px;top:180.0px;width:12.4px;height:13.560px;background:#d9d9d9"></div>
<div class="abs" style="left:275.0px;top:193.4px;width:12.4px;height:13.560px;background:#bfbfbf"></div>
<div class="abs" style="left:275.0px;top:206.9px;width:12.4px;height:13.560px;background:#a6a6a6"></div>
<div class="abs" style="left:275.0px;top:220.3px;width:12.4px;height:13.560px;background:#808080"></div>
<div class="abs" style="left:275.0px;top:166.500px;width:12.4px;height:67.400px;box-shadow:0 0 0 1px rgba(200,200,200,.7)"></div>
<div class="abs" style="left:275.0px;top:263.600px;width:12.4px;height:12.600px;background:#c00000;box-shadow:0 0 0 1px rgba(200,200,200,.7)"></div>
<div class="abs" style="left:292.9px;top:148.400px;width:12.4px;height:12.600px;background:#000000;box-shadow:0 0 0 1px rgba(200,200,200,.7)"></div>
<div class="abs" style="left:292.9px;top:166.5px;width:12.4px;height:13.560px;background:#808080"></div>
<div class="abs" style="left:292.9px;top:180.0px;width:12.4px;height:13.560px;background:#595959"></div>
<div class="abs" style="left:292.9px;top:193.4px;width:12.4px;height:13.560px;background:#404040"></div>
<div class="abs" style="left:292.9px;top:206.9px;width:12.4px;height:13.560px;background:#262626"></div>
<div class="abs" style="left:292.9px;top:220.3px;width:12.4px;height:13.560px;background:#0d0d0d"></div>
<div class="abs" style="left:292.9px;top:166.500px;width:12.4px;height:67.400px;box-shadow:0 0 0 1px rgba(200,200,200,.7)"></div>
<div class="abs" style="left:292.9px;top:263.600px;width:12.4px;height:12.600px;background:#ff0000;box-shadow:0 0 0 1px rgba(200,200,200,.7)"></div>
<div class="abs" style="left:310.7px;top:148.400px;width:12.4px;height:12.600px;background:#e7e6e6;box-shadow:0 0 0 1px rgba(200,200,200,.7)"></div>
<div class="abs" style="left:310.7px;top:166.5px;width:12.4px;height:13.560px;background:#d0cece"></div>
<div class="abs" style="left:310.7px;top:180.0px;width:12.4px;height:13.560px;background:#aeaaaa"></div>
<div class="abs" style="left:310.7px;top:193.4px;width:12.4px;height:13.560px;background:#757171"></div>
<div class="abs" style="left:310.7px;top:206.9px;width:12.4px;height:13.560px;background:#3a3838"></div>
<div class="abs" style="left:310.7px;top:220.3px;width:12.4px;height:13.560px;background:#161616"></div>
<div class="abs" style="left:310.7px;top:166.500px;width:12.4px;height:67.400px;box-shadow:0 0 0 1px rgba(200,200,200,.7)"></div>
<div class="abs" style="left:310.7px;top:263.600px;width:12.4px;height:12.600px;background:#ffc000;box-shadow:0 0 0 1px rgba(200,200,200,.7)"></div>
<div class="abs" style="left:328.6px;top:148.400px;width:12.4px;height:12.600px;background:#44546a;box-shadow:0 0 0 1px rgba(200,200,200,.7)"></div>
<div class="abs" style="left:328.6px;top:166.5px;width:12.4px;height:13.560px;background:#d6dce5"></div>
<div class="abs" style="left:328.6px;top:180.0px;width:12.4px;height:13.560px;background:#adb9ca"></div>
<div class="abs" style="left:328.6px;top:193.4px;width:12.4px;height:13.560px;background:#8497b0"></div>
<div class="abs" style="left:328.6px;top:206.9px;width:12.4px;height:13.560px;background:#333f50"></div>
<div class="abs" style="left:328.6px;top:220.3px;width:12.4px;height:13.560px;background:#222a35"></div>
<div class="abs" style="left:328.6px;top:166.500px;width:12.4px;height:67.400px;box-shadow:0 0 0 1px rgba(200,200,200,.7)"></div>
<div class="abs" style="left:328.6px;top:263.600px;width:12.4px;height:12.600px;background:#ffff00;box-shadow:0 0 0 1px rgba(200,200,200,.7)"></div>
<div class="abs" style="left:346.4px;top:148.400px;width:12.4px;height:12.600px;background:#4472c4;box-shadow:0 0 0 1px rgba(200,200,200,.7)"></div>
<div class="abs" style="left:346.4px;top:166.5px;width:12.4px;height:13.560px;background:#dae3f3"></div>
<div class="abs" style="left:346.4px;top:180.0px;width:12.4px;height:13.560px;background:#b4c7e7"></div>
<div class="abs" style="left:346.4px;top:193.4px;width:12.4px;height:13.560px;background:#8faadc"></div>
<div class="abs" style="left:346.4px;top:206.9px;width:12.4px;height:13.560px;background:#2f5597"></div>
<div class="abs" style="left:346.4px;top:220.3px;width:12.4px;height:13.560px;background:#203864"></div>
<div class="abs" style="left:346.4px;top:166.500px;width:12.4px;height:67.400px;box-shadow:0 0 0 1px rgba(200,200,200,.7)"></div>
<div class="abs" style="left:346.4px;top:263.600px;width:12.4px;height:12.600px;background:#92d050;box-shadow:0 0 0 1px rgba(200,200,200,.7)"></div>
<div class="abs" style="left:364.2px;top:148.400px;width:12.4px;height:12.600px;background:#ed7d31;box-shadow:0 0 0 1px rgba(200,200,200,.7)"></div>
<div class="abs" style="left:364.2px;top:166.5px;width:12.4px;height:13.560px;background:#fbe5d6"></div>
<div class="abs" style="left:364.2px;top:180.0px;width:12.4px;height:13.560px;background:#f8cbad"></div>
<div class="abs" style="left:364.2px;top:193.4px;width:12.4px;height:13.560px;background:#f4b183"></div>
<div class="abs" style="left:364.2px;top:206.9px;width:12.4px;height:13.560px;background:#c55a11"></div>
<div class="abs" style="left:364.2px;top:220.3px;width:12.4px;height:13.560px;background:#843c0c"></div>
<div class="abs" style="left:364.2px;top:166.500px;width:12.4px;height:67.400px;box-shadow:0 0 0 1px rgba(200,200,200,.7)"></div>
<div class="abs" style="left:364.2px;top:263.600px;width:12.4px;height:12.600px;background:#00b050;box-shadow:0 0 0 1px rgba(200,200,200,.7)"></div>
<div class="abs" style="left:382.1px;top:148.400px;width:12.4px;height:12.600px;background:#a5a5a5;box-shadow:0 0 0 1px rgba(200,200,200,.7)"></div>
<div class="abs" style="left:382.1px;top:166.5px;width:12.4px;height:13.560px;background:#ededed"></div>
<div class="abs" style="left:382.1px;top:180.0px;width:12.4px;height:13.560px;background:#dbdbdb"></div>
<div class="abs" style="left:382.1px;top:193.4px;width:12.4px;height:13.560px;background:#c9c9c9"></div>
<div class="abs" style="left:382.1px;top:206.9px;width:12.4px;height:13.560px;background:#7c7c7c"></div>
<div class="abs" style="left:382.1px;top:220.3px;width:12.4px;height:13.560px;background:#525252"></div>
<div class="abs" style="left:382.1px;top:166.500px;width:12.4px;height:67.400px;box-shadow:0 0 0 1px rgba(200,200,200,.7)"></div>
<div class="abs" style="left:382.1px;top:263.600px;width:12.4px;height:12.600px;background:#00b0f0;box-shadow:0 0 0 1px rgba(200,200,200,.7)"></div>
<div class="abs" style="left:400.0px;top:148.400px;width:12.4px;height:12.600px;background:#ffc000;box-shadow:0 0 0 1px rgba(200,200,200,.7)"></div>
<div class="abs" style="left:400.0px;top:166.5px;width:12.4px;height:13.560px;background:#fff2cc"></div>
<div class="abs" style="left:400.0px;top:180.0px;width:12.4px;height:13.560px;background:#ffe699"></div>
<div class="abs" style="left:400.0px;top:193.4px;width:12.4px;height:13.560px;background:#ffd966"></div>
<div class="abs" style="left:400.0px;top:206.9px;width:12.4px;height:13.560px;background:#bf9000"></div>
<div class="abs" style="left:400.0px;top:220.3px;width:12.4px;height:13.560px;background:#7f6000"></div>
<div class="abs" style="left:400.0px;top:166.500px;width:12.4px;height:67.400px;box-shadow:0 0 0 1px rgba(200,200,200,.7)"></div>
<div class="abs" style="left:400.0px;top:263.600px;width:12.4px;height:12.600px;background:#0070c0;box-shadow:0 0 0 1px rgba(200,200,200,.7)"></div>
<div class="abs" style="left:417.8px;top:148.400px;width:12.4px;height:12.600px;background:#5b9bd5;box-shadow:0 0 0 1px rgba(200,200,200,.7)"></div>
<div class="abs" style="left:417.8px;top:166.5px;width:12.4px;height:13.560px;background:#deebf7"></div>
<div class="abs" style="left:417.8px;top:180.0px;width:12.4px;height:13.560px;background:#bdd7ee"></div>
<div class="abs" style="left:417.8px;top:193.4px;width:12.4px;height:13.560px;background:#9dc3e6"></div>
<div class="abs" style="left:417.8px;top:206.9px;width:12.4px;height:13.560px;background:#2e75b6"></div>
<div class="abs" style="left:417.8px;top:220.3px;width:12.4px;height:13.560px;background:#1f4e79"></div>
<div class="abs" style="left:417.8px;top:166.500px;width:12.4px;height:67.400px;box-shadow:0 0 0 1px rgba(200,200,200,.7)"></div>
<div class="abs" style="left:417.8px;top:263.600px;width:12.4px;height:12.600px;background:#002060;box-shadow:0 0 0 1px rgba(200,200,200,.7)"></div>
<div class="abs" style="left:435.6px;top:148.400px;width:12.4px;height:12.600px;background:#70ad47;box-shadow:0 0 0 1px rgba(200,200,200,.7)"></div>
<div class="abs" style="left:435.6px;top:166.5px;width:12.4px;height:13.560px;background:#e2f0d9"></div>
<div class="abs" style="left:435.6px;top:180.0px;width:12.4px;height:13.560px;background:#c5e0b4"></div>
<div class="abs" style="left:435.6px;top:193.4px;width:12.4px;height:13.560px;background:#a9d18e"></div>
<div class="abs" style="left:435.6px;top:206.9px;width:12.4px;height:13.560px;background:#548235"></div>
<div class="abs" style="left:435.6px;top:220.3px;width:12.4px;height:13.560px;background:#385723"></div>
<div class="abs" style="left:435.6px;top:166.500px;width:12.4px;height:67.400px;box-shadow:0 0 0 1px rgba(200,200,200,.7)"></div>
<div class="abs" style="left:435.6px;top:263.600px;width:12.4px;height:12.600px;background:#7030a0;box-shadow:0 0 0 1px rgba(200,200,200,.7)"></div>
<div class="abs" style="left:363.2px;top:205.9px;width:14.4px;height:15.500px;border:1.500px solid #f7a86b;background:#c55a11"></div>
<div class="abs" style="left:291.4px;top:262.100px;width:15.4px;height:15.600px;border:1.500px solid #f5b06f;background:#fbe0c8"></div><div class="abs" style="left:292.9px;top:263.600px;width:12.4px;height:12.600px;background:#ff0000"></div>
<div class="abs" style="left:275px;top:305px;width:12.4px;height:12px;background:#ff5353"></div>
<div class="abs" style="left:292.9px;top:305px;width:12.4px;height:12px;background:#ff6a00"></div>
<div class="abs" style="left:273px;top:320px;width:178px;height:1px;background:#dcdcdc"></div>
<svg class="abs" style="left:277px;top:324.500px" width="16" height="16" viewBox="0 0 16 16"><g transform="translate(8 8)">
<path d="M0 0L0 -7.500A7.500 7.500 0 0 1 7.130 -2.320z" fill="#e8b04e"/>
<path d="M0 0L7.130 -2.320A7.500 7.500 0 0 1 4.410 6.070z" fill="#4e9a70"/>
<path d="M0 0L4.410 6.070A7.500 7.500 0 0 1 -4.410 6.070z" fill="#3f6fb0"/>
<path d="M0 0L-4.410 6.070A7.500 7.500 0 0 1 -7.130 -2.320z" fill="#c8453a"/>
<path d="M0 0L-7.130 -2.320A7.500 7.500 0 0 1 0 -7.500z" fill="#e2813a"/>
<path d="M0 0L0 -7.500M0 0L7.130 -2.320M0 0L4.410 6.070M0 0L-4.410 6.070M0 0L-7.130 -2.320" stroke="#f3f3f3" stroke-width="1"/></g></svg>
<span class="t" style="left:305.5px;top:326.9px;font-size:12.2px;color:#444;">其他色彩(<u>M</u>)...</span>
<div class="abs" style="left:304px;top:289px;width:32px;height:23.500px;background:#f4f4f4;border:1px solid #8f8f8f;border-radius:3.500px;box-shadow:1px 2px 4px rgba(0,0,0,.22)"></div>
<span class="t" style="left:308px;top:294.5px;font-size:12px;color:#333;">紅色</span>

</body></html>
